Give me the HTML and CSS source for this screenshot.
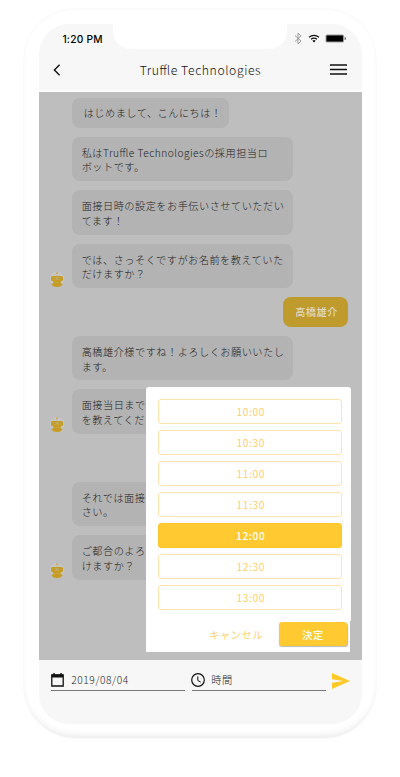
FILE: index.html
```html
<!DOCTYPE html>
<html lang="ja">
<head>
<meta charset="utf-8">
<title>Truffle Technologies</title>
<link rel="stylesheet" href="styles.css">
</head>
<body>
<svg class="defs" aria-hidden="true">
  <symbol id="bot" viewBox="0 0 18 18">
    <circle cx="9" cy="9" r="8" fill="#c4c4c5" stroke="#b5b6b9" stroke-width=".5"/>
    <circle cx="9" cy="3.200" r=".9" fill="#c9a02a"/>
    <path d="M9 3v3" stroke="#c9b87c" stroke-width=".5"/>
    <rect x="3" y="6" width="12" height="5" rx="1.600" fill="#c69d20"/>
    <path d="M4.800 6h8.400l-.5 7H5.300z" fill="#c69d20"/>
    <path d="M3.300 14.500q1.500-1.500 3.700-1.400h4q2.200-.1 3.700 1.400-2 2.500-5.700 2.500t-5.700-2.500z" fill="#c69d20"/>
    <path d="M6.500 12.600h5" stroke="#c3ab62" stroke-width=".7"/>
    <rect x="5.500" y="7.200" width="7" height="2.200" rx="1.100" fill="#c4ad65"/>
    <circle cx="6.900" cy="8.300" r=".7" fill="#ad8d2b"/>
    <circle cx="11.100" cy="8.300" r=".7" fill="#ad8d2b"/>
  </symbol>
</svg>
<div class="phone">
  <div class="screen">
    <header class="header">
      <div class="status">
        <span class="clock">1:20 PM</span>
        <span class="notch"></span>
        <span class="indicators">
          <svg class="bluetooth" viewBox="0 0 8 13"><path d="M1 3.500l6 5.500-3 3V1l3 3-6 5.500" fill="none" stroke="#888" stroke-width=".8"/></svg>
          <svg class="wifi" viewBox="0 0 12 9"><path d="M1 3.300q5-4 10 0M3 5.300q3-2.300 6 0" fill="none" stroke="#111" stroke-width="1.300"/><path d="M4.400 6.700q1.600-1.200 3.200 0L6 8.500z" fill="#111"/></svg>
          <svg class="battery" viewBox="0 0 21 9"><rect x=".5" y=".5" width="18.500" height="8" rx="1.500" fill="#999"/><rect x="1.500" y="1.500" width="16.500" height="6" rx=".5"/><path d="M19.700 3q1 0 1 1.500t-1 1.500z" fill="#333"/></svg>
        </span>
      </div>
      <div class="titlebar">
        <svg class="back" viewBox="0 0 8 12"><path d="M6.600.8L1.400 6l5.200 5.200" fill="none" stroke="#111" stroke-width="1.400"/></svg>
        <h1 class="title">Truffle Technologies</h1>
        <svg class="menu" viewBox="0 0 17 11"><path d="M0 1h17M0 5.500h17M0 10h17" stroke="#111" stroke-width="1.400"/></svg>
      </div>
    </header>
    <main class="chat">
      <div class="row"><p class="bubble short">はじめまして、こんにちは！</p></div>
      <div class="row"><p class="bubble">私はTruffle Technologiesの採用担当ロ<br>ボットです。</p></div>
      <div class="row"><p class="bubble">面接日時の設定をお手伝いさせていただい<br>てます！</p></div>
      <div class="row"><svg class="avatar"><use href="#bot" width="18" height="18"/></svg><p class="bubble">では、さっそくですがお名前を教えていた<br>だけますか？</p></div>
      <div class="row own"><p class="bubble reply">高橋雄介</p></div>
      <div class="row"><p class="bubble">高橋雄介様ですね！よろしくお願いいたし<br>ます。</p></div>
      <div class="row"><svg class="avatar"><use href="#bot" width="18" height="18"/></svg><p class="bubble">面接当日まで<br>を教えてくだ</p></div>
      <div class="row later"><p class="bubble">それでは面接<br>さい。</p></div>
      <div class="row"><svg class="avatar"><use href="#bot" width="18" height="18"/></svg><p class="bubble">ご都合のよろ<br>けますか？</p></div>
      <section class="picker">
        <div class="options">
          <button class="option">10:00</button>
          <button class="option">10:30</button>
          <button class="option">11:00</button>
          <button class="option">11:30</button>
          <button class="option selected">12:00</button>
          <button class="option">12:30</button>
          <button class="option">13:00</button>
        </div>
        <div class="actions">
          <button class="cancel">キャンセル</button>
          <button class="confirm">決定</button>
        </div>
      </section>
    </main>
    <footer class="composer">
      <div class="field">
        <svg class="calendar" viewBox="0 0 13 14"><path d="M.8 2h11.400v11H.8z" fill="none" stroke="#111" stroke-width="1.300"/><path d="M.8 1.500h11.400v3H.8zM2.300 0h1.400v2H2.300zM9.300 0h1.400v2H9.300z" fill="#111"/></svg>
        <span class="value">2019/08/04</span>
      </div>
      <div class="field time">
        <svg class="dial" viewBox="0 0 14 14"><circle cx="7" cy="7" r="6.300" fill="none" stroke="#111" stroke-width="1.200"/><path d="M6.800 3.400v4l3 1.800" fill="none" stroke="#111" stroke-width="1"/></svg>
        <span class="value">時間</span>
      </div>
      <svg class="send" viewBox="0 0 18 16"><path d="M0 0l18 8L0 16V9.700L11.500 8 0 6.300z" fill="#ffc928"/></svg>
    </footer>
  </div>
</div>
</body>
</html>
```
FILE: styles.css
```css
* { box-sizing: border-box; }

body {
  margin: 0;
  padding: 8px 0 0 23px;
  height: 777px;
  overflow: hidden;
  background: #fff;
  font-family: "Noto Sans CJK JP", sans-serif;
}

.defs { display: block; width: 0; height: 0; }

.phone {
  width: 354px;
  height: 731px;
  padding: 15px 15px 15px 14.700px;
  border-radius: 52px;
  border: 1px solid #fafafa;
  box-shadow: inset 0 -7px 8px -5px #e9e9e9, inset 0 0 5px #fafafa;
}

.screen {
  display: flex;
  flex-direction: column;
  width: 323px;
  height: 700px;
  border-radius: 30px;
  overflow: hidden;
  background: #f7f7f7;
}

.header { flex: none; height: 68px; border-bottom: 2px solid #fdfdfd; }

.status {
  display: grid;
  grid-template-columns: 74px 174px 1fr;
  height: 25px;
}

.clock {
  padding: 7.500px 0 0 23.700px;
  font: 500 10.200px/15px Inter, sans-serif;
  letter-spacing: .25px;
  white-space: nowrap;
  color: #000;
}

.notch { background: #fff; border-radius: 0 0 18px 18px; }

.indicators { display: flex; align-items: center; padding: 4px 0 0 7px; }
.bluetooth { width: 8px; height: 13px; }
.wifi { width: 12px; height: 9px; margin-left: 6px; }
.battery { width: 21px; height: 9px; margin-left: 5.500px; }

.titlebar {
  display: grid;
  grid-template-columns: 30px 1fr 30px;
  align-items: center;
  height: 41px;
  padding: 0 14.500px 0 14px;
}

.back { width: 8px; height: 12px; }
.menu { width: 17px; height: 11px; justify-self: end; }

.title {
  margin: 0;
  padding-left: 1px;
  font-size: 12.200px;
  line-height: 18px;
  font-weight: 300;
  letter-spacing: .6px;
  font-feature-settings: "liga" 1;
  text-align: center;
  color: #111;
}

.chat {
  position: relative;
  flex: none;
  height: 568px;
  padding: 6px 13.500px 0 10px;
  background: #bebebe;
}

.row { display: flex; justify-content: flex-end; margin-bottom: 8.900px; padding-right: 55px; }
.row .bubble { margin: 0; }
.row:first-child { justify-content: flex-start; padding-left: 23.500px; }
.later { margin-top: 47.800px; }

.avatar { width: 18px; height: 18px; margin: 26px 6.500px 0 0; flex: none; }

.bubble {
  flex: none;
  width: 221px;
  height: 44.500px;
  padding: 9px 0 0 9.500px;
  border-radius: 8px;
  background: #b3b3b3;
  font-size: 10.200px;
  line-height: 14.600px;
  font-weight: 300;
  letter-spacing: .48px;
  font-feature-settings: "liga" 1;
  white-space: nowrap;
  color: #222;
}

.bubble.short { width: 157px; height: 30px; padding: 8px 0 0 11.500px; }

.own { padding-right: 0; }
.bubble.reply {
  width: 65px;
  height: 30px;
  padding: 8px 0 0 12px;
  background: #bf9a2d;
  color: #e0d8c3;
  font-weight: 500;
}

.picker {
  position: absolute;
  left: 107.500px;
  top: 295px;
  width: 205px;
}

.options {
  display: flex;
  flex-direction: column;
  gap: 6px;
  height: 234px;
  padding: 12.300px 9px 0 12px;
  border-radius: 3px 3px 0 0;
  background: #fff;
}

button {
  margin: 0;
  padding: 0;
  border: 0;
  background: none;
  font-family: inherit;
  letter-spacing: .6px;
}

.option {
  height: 25px;
  flex: none;
  padding-left: 1px;
  border: 1px solid #ffe4ad;
  border-radius: 3px;
  font-size: 10.200px;
  line-height: 23px;
  color: #ffd06b;
}

.option.selected { background: #ffca31; border-color: #ffc62a; color: #fff; font-weight: 500; }

.actions {
  display: flex;
  justify-content: flex-end;
  width: 204px;
  height: 31px;
  padding: 1px 3.500px 0 0;
  background: #fff;
}

.cancel { height: 24px; margin-right: 16px; font-size: 10.200px; color: #ffd06b; }

.confirm {
  width: 67.500px;
  height: 24px;
  border-radius: 3px;
  background: #ffca31;
  box-shadow: .5px 1px 1px #bbb;
  color: #fff;
  font-size: 10.200px;
  font-weight: 500;
}

.composer { display: flex; flex: none; padding: 11px 0 0 12.500px; height: 64px; }

.field {
  display: flex;
  width: 134px;
  height: 20px;
  border-bottom: 1px solid #777;
  color: #222;
}

.time { margin-left: 7px; }
.calendar { width: 13px; height: 14px; margin-top: 2px; }
.dial { width: 14px; height: 14px; margin: 2px 0 0 -1px; }

.value { margin-left: 7px; font-size: 10.200px; line-height: 18px; font-weight: 300; letter-spacing: .6px; }
.time .value { margin-left: 6px; }
.send { width: 18px; height: 16px; margin: 2px 0 0 6px; }
```
